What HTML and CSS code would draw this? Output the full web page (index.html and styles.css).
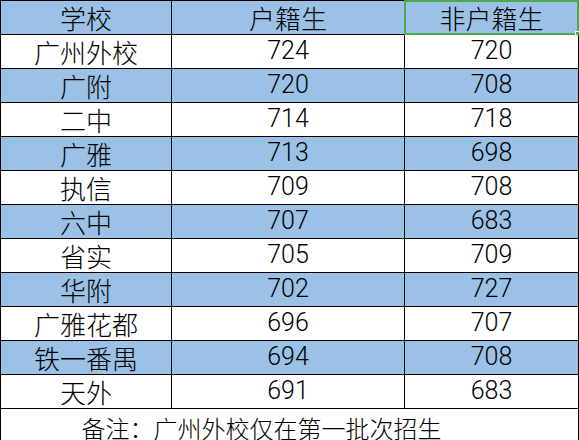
FILE: index.html
```html
<!DOCTYPE html>
<html lang="zh">
<head>
<meta charset="utf-8">
<link rel="stylesheet" href="styles.css">
</head>
<body>
<div class="sheet">
  <div class="cell hd">学校</div><div class="cell hd">户籍生</div><div class="cell hd sel">非户籍生</div>
  <div class="cell">广州外校</div><div class="cell num">724</div><div class="cell num">720</div>
  <div class="cell blue">广附</div><div class="cell num blue">720</div><div class="cell num blue">708</div>
  <div class="cell">二中</div><div class="cell num">714</div><div class="cell num">718</div>
  <div class="cell blue">广雅</div><div class="cell num blue">713</div><div class="cell num blue">698</div>
  <div class="cell">执信</div><div class="cell num">709</div><div class="cell num">708</div>
  <div class="cell blue">六中</div><div class="cell num blue">707</div><div class="cell num blue">683</div>
  <div class="cell">省实</div><div class="cell num">705</div><div class="cell num">709</div>
  <div class="cell blue">华附</div><div class="cell num blue">702</div><div class="cell num blue">727</div>
  <div class="cell">广雅花都</div><div class="cell num">696</div><div class="cell num">707</div>
  <div class="cell blue">铁一番禺</div><div class="cell num blue">694</div><div class="cell num blue">708</div>
  <div class="cell">天外</div><div class="cell num">691</div><div class="cell num">683</div>
  <div class="note">备注：广州外校仅在第一批次招生</div>
</div>
</body>
</html>
```
FILE: styles.css
```css
html, body {
  margin: 0;
  padding: 0;
  background: #fff;
}
body {
  width: 579px;
  height: 440px;
  overflow: hidden;
  font-family: "Liberation Sans", "Noto Sans CJK SC", sans-serif;
  color: #000;
}
.sheet {
  display: grid;
  grid-template-columns: 171px 233px 175px;
  grid-auto-rows: 34px;
  border-top: 1px solid #000;
  border-left: 1px solid #000;
  width: 579px;
  box-sizing: border-box;
}
.cell {
  position: relative;
  box-sizing: border-box;
  border-right: 1px solid #000;
  border-bottom: 1px solid #000;
  display: flex;
  justify-content: center;
  align-items: flex-end;
  font-family: "Noto Sans CJK SC", sans-serif;
  font-weight: 300;
  font-size: 26px;
  line-height: 30px;
  padding-bottom: 1px;
  background: #fff;
}
.cell:nth-child(3n) {
  margin-right: 1px;
}
.hd, .blue {
  background: #9bc2e6;
}
.num {
  font-family: "Roboto", "Liberation Sans", sans-serif;
  font-weight: 300;
  font-size: 25px;
  line-height: 30px;
  padding-bottom: 2px;
}
.sel::before {
  content: "";
  position: absolute;
  left: -1px;
  top: -1px;
  right: -1px;
  bottom: -1px;
  border: 2px solid #4ea84e;
}
.sel::after {
  content: "";
  position: absolute;
  right: -3px;
  bottom: -3px;
  width: 4px;
  height: 4px;
  background: #4ea84e;
  border: 1px solid #fff;
}
.note {
  grid-column: 1 / 4;
  box-sizing: border-box;
  border-right: 1px solid #000;
  margin-right: 1px;
  height: 31px;
  display: flex;
  justify-content: center;
  align-items: flex-start;
  font-family: "Noto Sans CJK SC", sans-serif;
  font-weight: 300;
  font-size: 24px;
  line-height: 30px;
  padding-top: 4px;
  padding-right: 56px;
}
```
